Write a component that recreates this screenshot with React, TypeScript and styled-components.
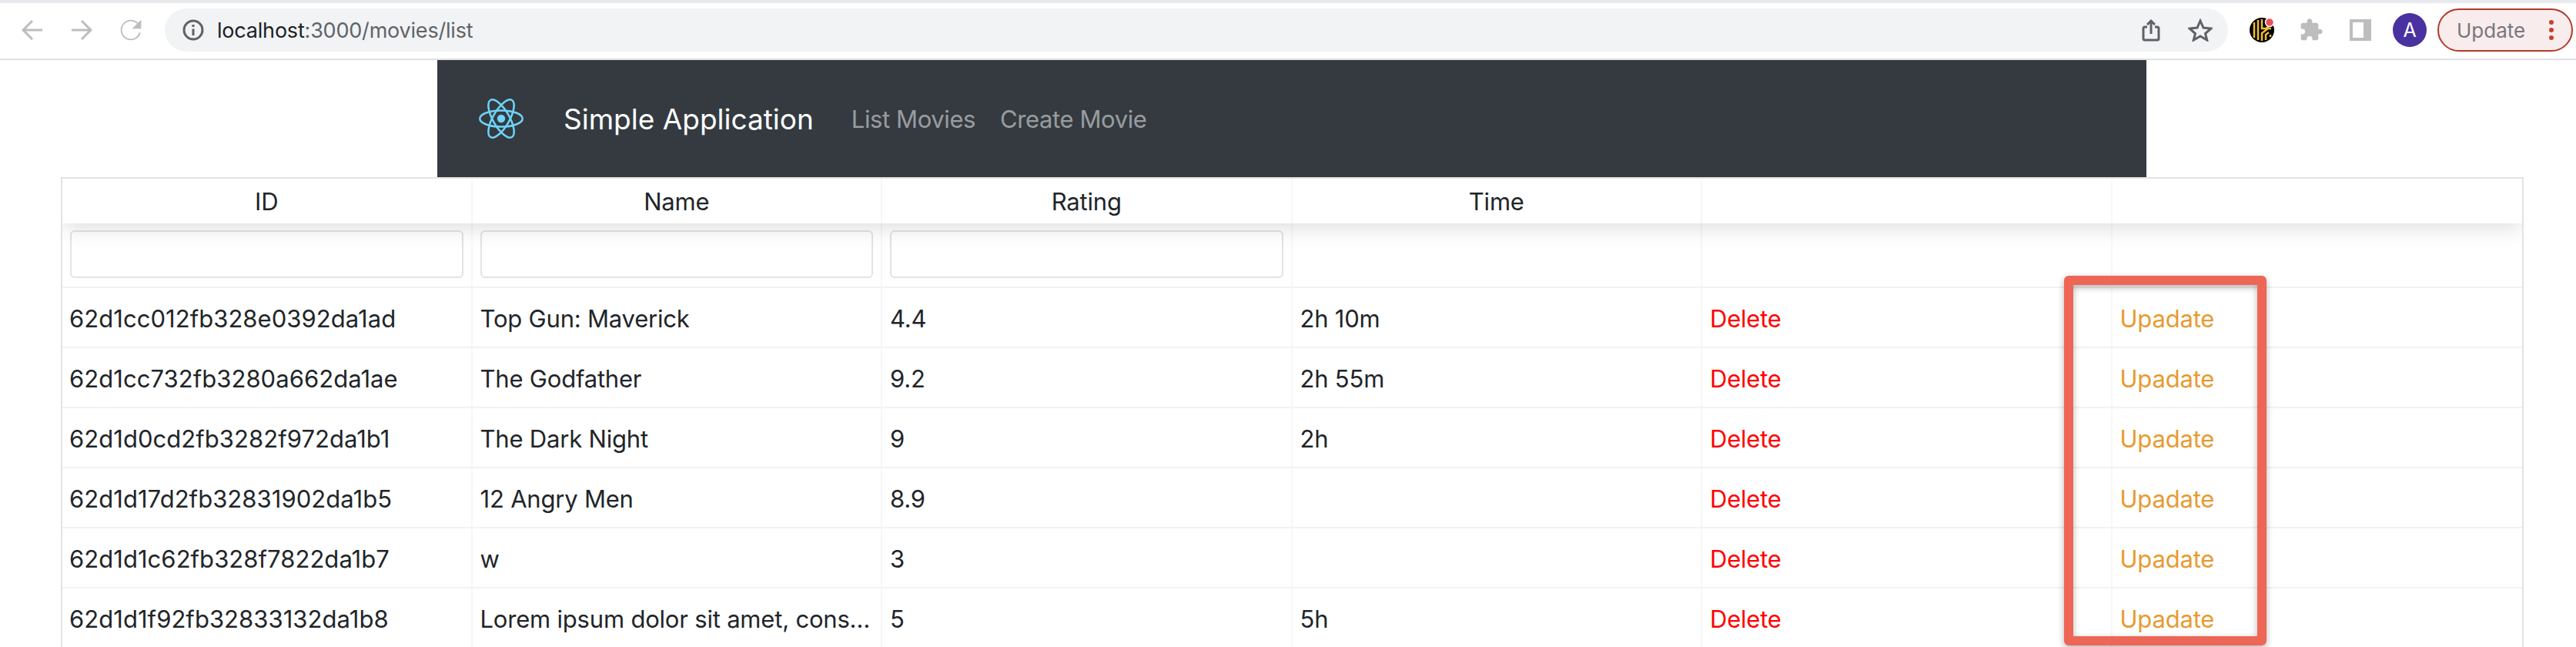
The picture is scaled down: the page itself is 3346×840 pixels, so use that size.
import React from "react";
import styled, { createGlobalStyle } from "styled-components";

const GlobalStyle = createGlobalStyle`
  html, body {
    margin: 0;
    padding: 0;
    background: #fff;
  }
  body {
    font-family: Inter, "Liberation Sans", sans-serif;
    color: #212529;
  }
  * {
    box-sizing: border-box;
  }
`;

const Page = styled.div`
  width: 3346px;
  height: 840px;
  overflow: hidden;
`;

const TabStrip = styled.div`
  height: 4px;
  background: #e8eaed;
`;

const Toolbar = styled.div`
  height: 74px;
  padding: 8px 4px 10px 10px;
  display: flex;
  align-items: center;
  background: #fff;
  border-bottom: 2px solid #dfe1e3;
`;

const IconSlot = styled.div`
  width: 64px;
  height: 56px;
  flex: none;
  display: flex;
  align-items: center;
  justify-content: center;
`;

const UrlPill = styled.div`
  flex: 1;
  height: 56px;
  margin: 0 12px 0 12px;
  padding: 0 4px 0 23px;
  display: flex;
  align-items: center;
  border-radius: 28px;
  background: #f1f3f4;
`;

const UrlText = styled.div`
  flex: 1;
  margin-left: 17px;
  font-size: 27px;
  letter-spacing: -0.2px;
  color: #5f6368;

  b {
    font-weight: 400;
    color: #202124;
  }
`;

const Avatar = styled.div`
  width: 44px;
  height: 44px;
  border-radius: 50%;
  background: #4a31a0;
  color: #fff;
  font-size: 25px;
  display: flex;
  align-items: center;
  justify-content: center;
`;

const UpdatePill = styled.div`
  width: 176px;
  height: 56px;
  margin-left: 4px;
  padding: 0 23px 0 23px;
  flex: none;
  display: flex;
  align-items: center;
  justify-content: space-between;
  border: 2px solid #b3392a;
  border-radius: 28px;
  background: #f9ecec;
  color: #75787c;
  font-size: 26px;
`;

const Dots = styled.div`
  display: flex;
  flex-direction: column;
  gap: 4px;

  i {
    width: 6px;
    height: 6px;
    border-radius: 50%;
    background: #c8402f;
  }
`;

const Navbar = styled.nav`
  width: 2220px;
  height: 152px;
  margin-left: 568px;
  padding-left: 54px;
  display: flex;
  align-items: center;
  background: #343a40;
`;

const Brand = styled.div`
  margin-left: 52px;
  margin-right: 49px;
  font-size: 37px;
  color: #fff;
`;

const NavLink = styled.a`
  margin-right: 32px;
  font-size: 31px;
  letter-spacing: -0.4px;
  color: rgba(255, 255, 255, 0.5);
`;

const Table = styled.div`
  position: relative;
  width: 3199px;
  height: 620px;
  margin-left: 79px;
  overflow: hidden;
  border: 2px solid #e3e3e3;
  border-bottom: none;
`;

const Row = styled.div`
  display: grid;
  grid-template-columns: repeat(6, 1fr);
  height: 78px;
  border-bottom: 2px solid #f2f2f2;
`;

const HeaderRow = styled(Row)`
  position: relative;
  z-index: 1;
  height: 58px;
  border-bottom: none;
  background: #fff;
  box-shadow: 0 4px 30px rgba(0, 0, 0, 0.15);
`;

const FilterRow = styled(Row)`
  height: 84px;
`;

const Cell = styled.div`
  min-width: 0;
  padding: 2px 10px 0;
  display: flex;
  align-items: center;
  border-right: 2px solid #f7f7f7;
  font-size: 31px;
  letter-spacing: -0.2px;

  &:last-child {
    border-right: none;
  }
`;

const HeaderCell = styled(Cell)`
  justify-content: center;
  padding-top: 0;
`;

const FilterCell = styled(Cell)`
  padding-top: 0;
  padding-bottom: 2px;
`;

const CellText = styled.span`
  overflow: hidden;
  white-space: nowrap;
  text-overflow: ellipsis;
`;

const IdText = styled(CellText)`
  margin-left: -1px;
  letter-spacing: 0.05px;
`;

const FilterInput = styled.input`
  width: 100%;
  height: 62px;
  border: 2px solid #e3e3e3;
  border-radius: 6px;
  background: #fff;
  outline: none;
`;

const ActionLink = styled.a<{ $color: string }>`
  color: ${(p) => p.$color};
`;

const Highlight = styled.div`
  position: absolute;
  z-index: 2;
  top: 126px;
  left: 2600px;
  width: 263px;
  height: 480px;
  border: 12px solid #ee6655;
  border-radius: 6px;
  box-shadow: 0 3px 8px rgba(0, 0, 0, 0.3), inset 0 3px 8px rgba(0, 0, 0, 0.3);
`;

const movies = [
  { id: "62d1cc012fb328e0392da1ad", name: "Top Gun: Maverick", rating: "4.4", time: "2h 10m" },
  { id: "62d1cc732fb3280a662da1ae", name: "The Godfather", rating: "9.2", time: "2h 55m" },
  { id: "62d1d0cd2fb3282f972da1b1", name: "The Dark Night", rating: "9", time: "2h" },
  { id: "62d1d17d2fb32831902da1b5", name: "12 Angry Men", rating: "8.9", time: "" },
  { id: "62d1d1c62fb328f7822da1b7", name: "w", rating: "3", time: "" },
  {
    id: "62d1d1f92fb32833132da1b8",
    name: "Lorem ipsum dolor sit amet, consectetur adipiscing elit",
    rating: "5",
    time: "5h",
  },
];

const BackIcon = () => (
  <svg width="28" height="28" viewBox="0 0 28 28" fill="none" stroke="#bdbdbd" strokeWidth="3">
    <path d="M27 14H2M14 2L2 14l12 12" />
  </svg>
);

const ForwardIcon = () => (
  <svg width="28" height="28" viewBox="0 0 28 28" fill="none" stroke="#bdbdbd" strokeWidth="3">
    <path d="M1 14h25M14 2l12 12-12 12" />
  </svg>
);

const ReloadIcon = () => (
  <svg width="40" height="40" viewBox="0 0 24 24" fill="#bdbdbd">
    <path d="M17.65 6.35A7.958 7.958 0 0 0 12 4c-4.42 0-7.99 3.58-7.99 8s3.57 8 7.99 8c3.73 0 6.84-2.55 7.73-6h-1.2A7 7 0 0 1 12 18.9c-3.8 0-6.9-3.1-6.9-6.9S8.2 5.1 12 5.1c1.9 0 3.6.8 4.9 2L13 11h7V4l-2.35 2.35z" />
  </svg>
);

const InfoIcon = () => (
  <svg width="28" height="28" viewBox="0 0 28 28" fill="none" stroke="#5f6368" strokeWidth="3" style={{ flex: "none" }}>
    <circle cx="14" cy="14" r="12" />
    <path d="M14 12.5V21" />
    <path d="M14 7v3" />
  </svg>
);

const ShareIcon = () => (
  <svg width="24" height="30" viewBox="0 0 24 30" fill="none" stroke="#5f6368" strokeWidth="3">
    <path d="M7 11H4a2 2 0 0 0-2 2v13a2 2 0 0 0 2 2h16a2 2 0 0 0 2-2V13a2 2 0 0 0-2-2h-3" />
    <path d="M12 20V3M7 8l5-5 5 5" />
  </svg>
);

const StarIcon = () => (
  <svg width="32" height="30" viewBox="0 0 32 30" fill="none" stroke="#5f6368" strokeWidth="3">
    <path d="M16 3l4 9 10 1-7.500 6.500L24.700 28 16 23l-8.700 5 2.200-8.500L2 13l10-1z" />
  </svg>
);

const KeeperIcon = () => (
  <svg width="34" height="36" viewBox="0 0 34 36">
    <circle cx="17" cy="18" r="16" fill="#000" />
    <g fill="none" stroke="#f0bd2e" strokeWidth="2.500">
      <path d="M7 8v20M12 5v26M17 4v12h12M17 32V22l8-6M22 31v-7l4-3M28 27v-3M22 16l8-6" />
    </g>
    <circle cx="27" cy="8" r="5.500" fill="#e9505a" stroke="#fff" strokeWidth="1.500" />
  </svg>
);

const PuzzleIcon = () => (
  <svg width="32" height="32" viewBox="0 0 24 24" fill="#bdbdbd">
    <path d="M20.5 11H19V7c0-1.100-.9-2-2-2h-4V3.500C13 2.120 11.880 1 10.500 1S8 2.120 8 3.500V5H4c-1.100 0-1.990.9-1.990 2v3.800H3.500c1.490 0 2.700 1.210 2.700 2.700s-1.210 2.700-2.700 2.700H2V20c0 1.100.9 2 2 2h3.800v-1.500c0-1.490 1.210-2.700 2.700-2.700 1.490 0 2.700 1.210 2.700 2.700V22H17c1.100 0 2-.9 2-2v-4h1.500c1.380 0 2.500-1.120 2.500-2.500S21.880 11 20.500 11z" />
  </svg>
);

const SidePanelIcon = () => (
  <svg width="28" height="28" viewBox="0 0 28 28">
    <path fill="#bdbdbd" fillRule="evenodd" d="M0 0h28v28H0zM4 4v20h14V4z" />
  </svg>
);

const ReactLogo = () => (
  <svg width="58" height="52" viewBox="-11.5 -10.23 23 20.46" style={{ flex: "none" }}>
    <circle r="2.050" fill="#6ed3f7" />
    <g fill="none" stroke="#6ed3f7" strokeWidth="1">
      <ellipse rx="11" ry="4.200" />
      <ellipse rx="11" ry="4.200" transform="rotate(60)" />
      <ellipse rx="11" ry="4.200" transform="rotate(120)" />
    </g>
  </svg>
);

export default function App() {
  return (
    <Page>
      <GlobalStyle />
      <TabStrip />
      <Toolbar>
        <IconSlot>
          <BackIcon />
        </IconSlot>
        <IconSlot>
          <ForwardIcon />
        </IconSlot>
        <IconSlot>
          <ReloadIcon />
        </IconSlot>
        <UrlPill>
          <InfoIcon />
          <UrlText>
            <b>localhost</b>:3000/movies/list
          </UrlText>
          <IconSlot>
            <ShareIcon />
          </IconSlot>
          <IconSlot>
            <StarIcon />
          </IconSlot>
        </UrlPill>
        <IconSlot>
          <KeeperIcon />
        </IconSlot>
        <IconSlot>
          <PuzzleIcon />
        </IconSlot>
        <IconSlot>
          <SidePanelIcon />
        </IconSlot>
        <IconSlot>
          <Avatar>A</Avatar>
        </IconSlot>
        <UpdatePill>
          Update
          <Dots>
            <i />
            <i />
            <i />
          </Dots>
        </UpdatePill>
      </Toolbar>
      <Navbar>
        <ReactLogo />
        <Brand>Simple Application</Brand>
        <NavLink>List Movies</NavLink>
        <NavLink>Create Movie</NavLink>
      </Navbar>
      <Table>
        <HeaderRow>
          <HeaderCell>ID</HeaderCell>
          <HeaderCell>Name</HeaderCell>
          <HeaderCell>Rating</HeaderCell>
          <HeaderCell>Time</HeaderCell>
          <HeaderCell />
          <HeaderCell />
        </HeaderRow>
        <FilterRow>
          <FilterCell>
            <FilterInput />
          </FilterCell>
          <FilterCell>
            <FilterInput />
          </FilterCell>
          <FilterCell>
            <FilterInput />
          </FilterCell>
          <FilterCell />
          <FilterCell />
          <FilterCell />
        </FilterRow>
        {movies.map((movie) => (
          <Row key={movie.id}>
            <Cell>
              <IdText>{movie.id}</IdText>
            </Cell>
            <Cell>
              <CellText>{movie.name}</CellText>
            </Cell>
            <Cell>
              <CellText>{movie.rating}</CellText>
            </Cell>
            <Cell>
              <CellText>{movie.time}</CellText>
            </Cell>
            <Cell>
              <ActionLink $color="#ff0000">Delete</ActionLink>
            </Cell>
            <Cell>
              <ActionLink $color="#e89a30">Upadate</ActionLink>
            </Cell>
          </Row>
        ))}
        <Highlight />
      </Table>
    </Page>
  );
}
